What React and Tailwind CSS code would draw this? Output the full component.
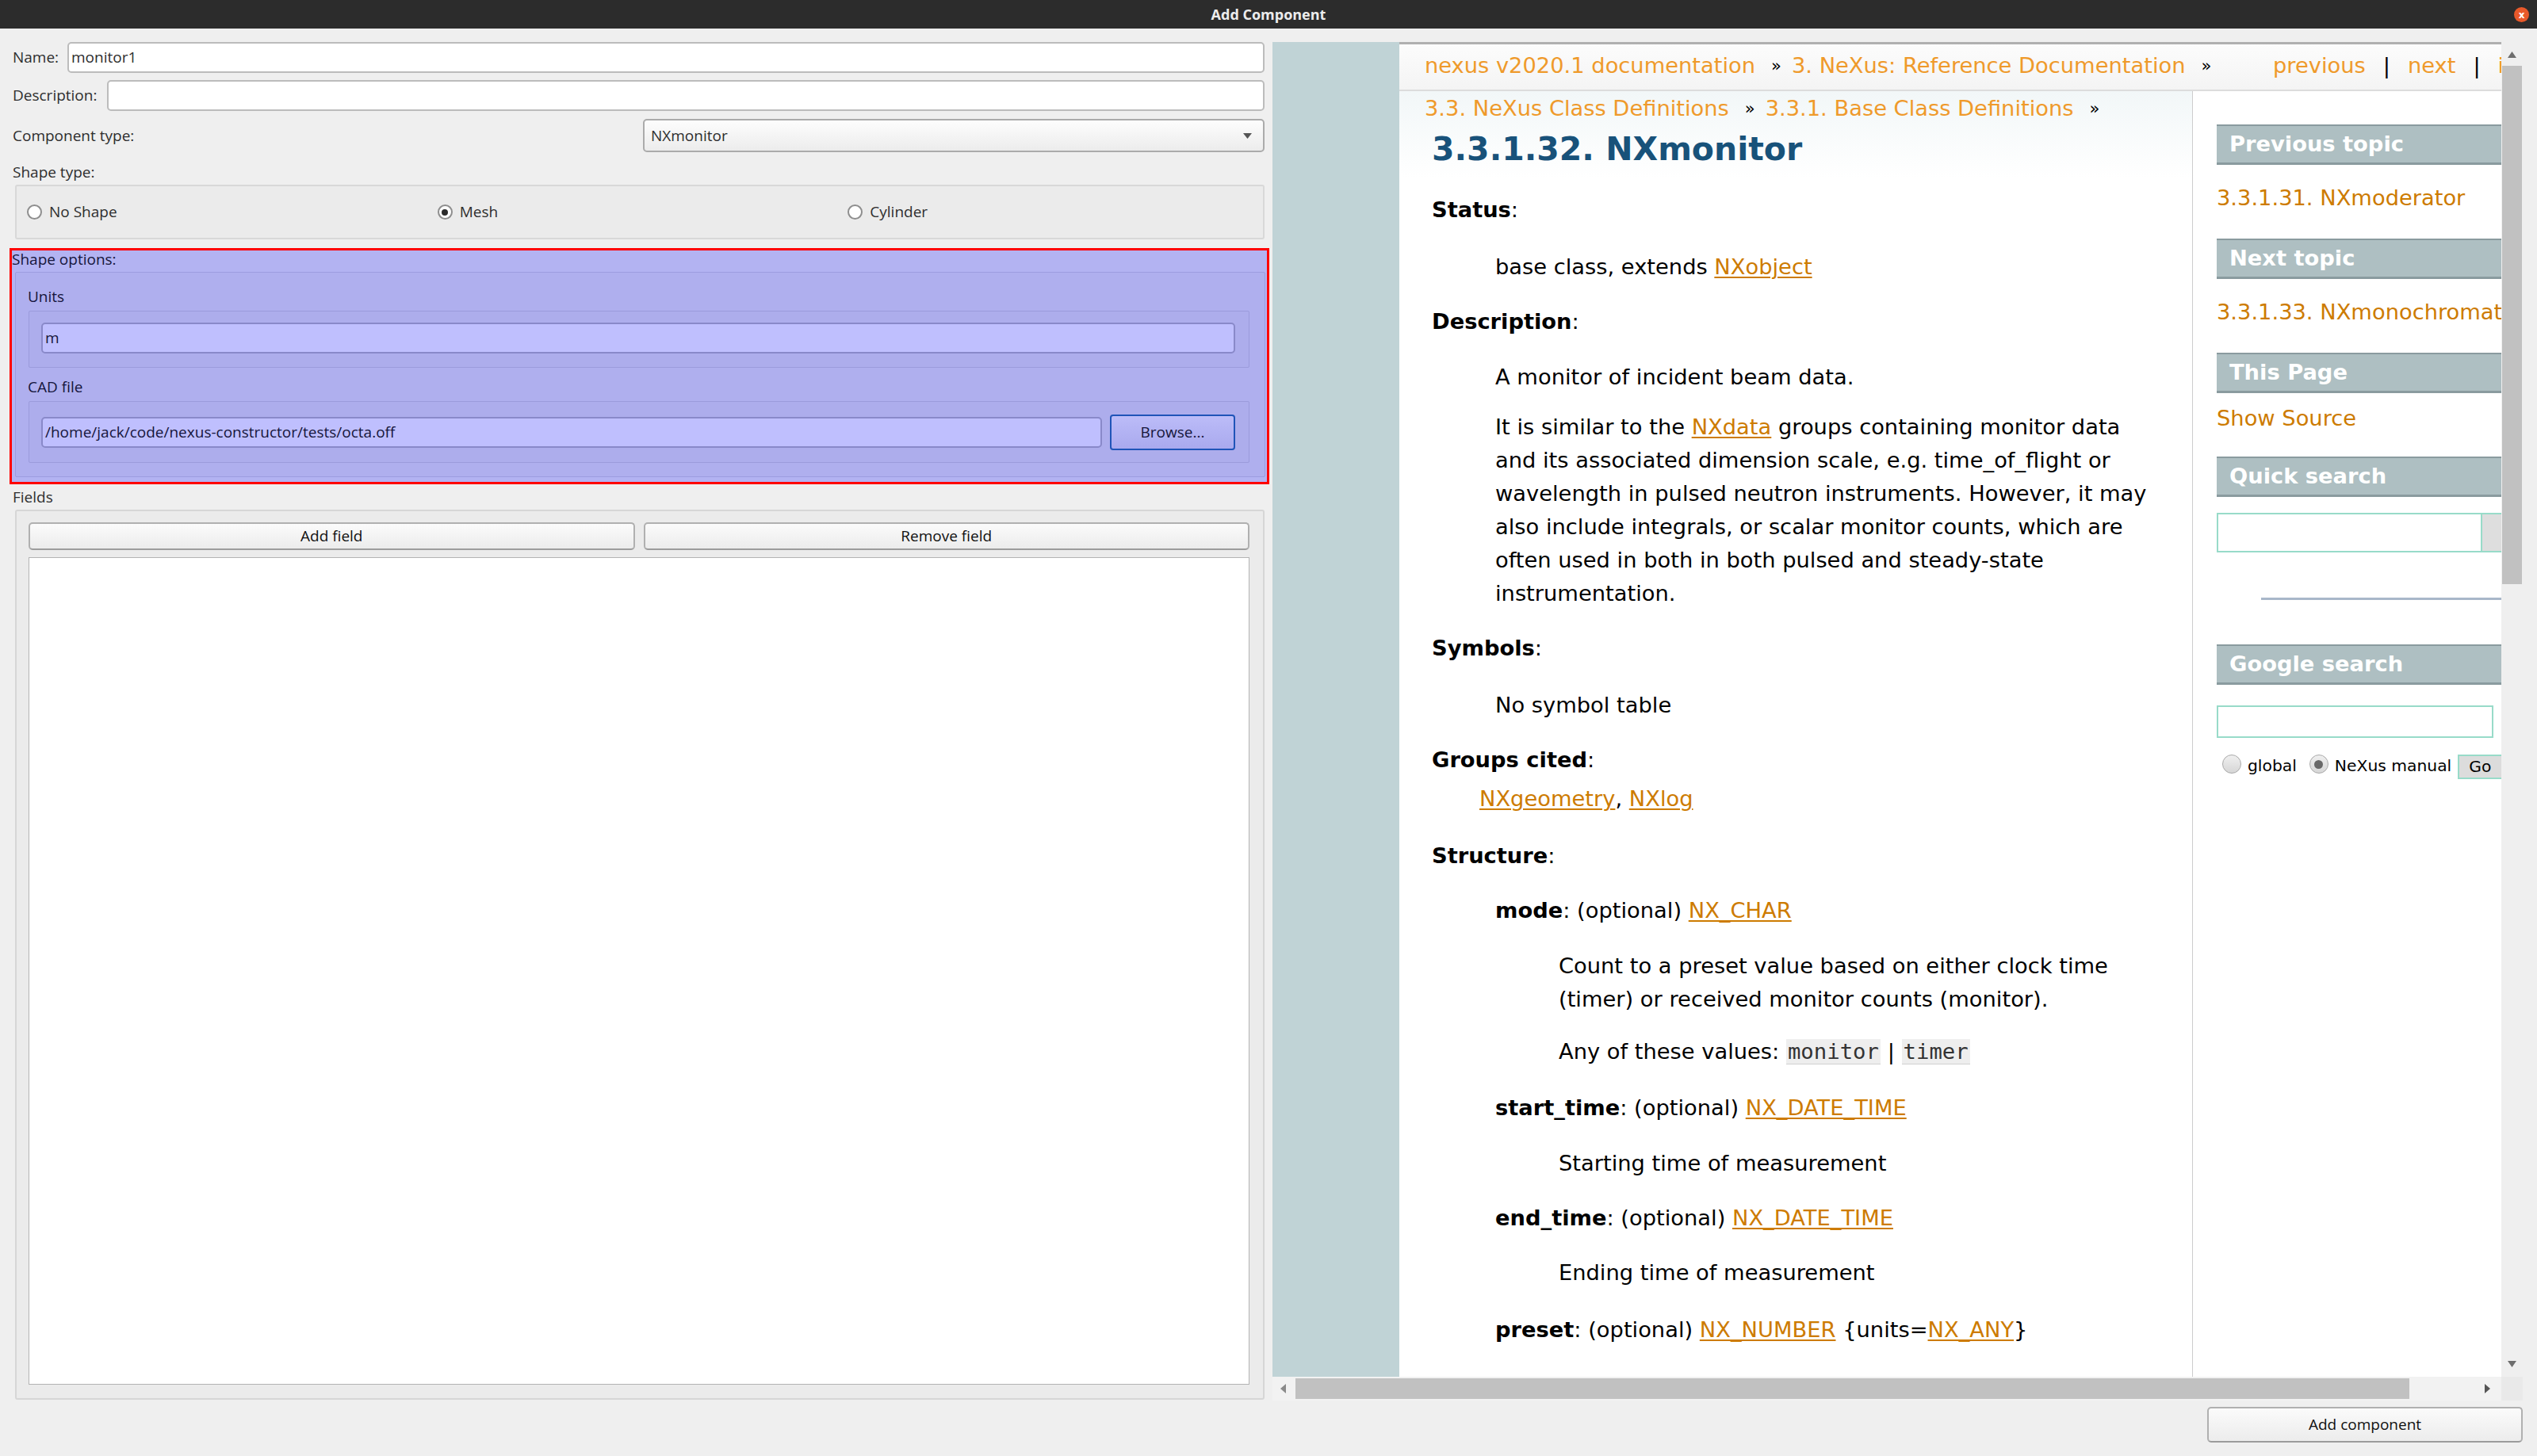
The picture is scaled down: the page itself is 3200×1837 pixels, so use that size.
import React from "react";

function QtInput({ children, className = "" }) {
  return (
    <div className={"h-[39px] bg-white border-2 border-[#bcbcbc] rounded-[5px] flex items-center pl-[3px] " + className}>
      {children}
    </div>
  );
}

function Radio({ checked, label }) {
  return (
    <div className="flex items-center gap-[9px]">
      <span className="w-[19px] h-[19px] rounded-full border-2 border-[#8e8e8e] bg-white flex items-center justify-center">
        {checked && <span className="w-[8px] h-[8px] rounded-full bg-[#2b2b2b]" />}
      </span>
      <span>{label}</span>
    </div>
  );
}

function QtButton({ children, className = "" }) {
  return (
    <div className={"flex items-center justify-center rounded-[5px] border-2 border-[#b0b0b0] border-b-[#9c9c9c] bg-gradient-to-b from-[#fbfbfb] to-[#ececec] " + className}>
      {children}
    </div>
  );
}

function LeftPanel() {
  return (
    <div className="w-[1600px] flex-none flex flex-col pl-[16px] pr-[5px] pb-[1px] text-[19px] text-[#2e2e2e] font-['Open_Sans',sans-serif]">
      <div className="h-[39px] flex items-center">
        <span className="w-[69px] flex-none">Name:</span>
        <QtInput className="flex-1">monitor1</QtInput>
      </div>
      <div className="mt-[9px] h-[39px] flex items-center">
        <span className="w-[119px] flex-none">Description:</span>
        <QtInput className="flex-1" />
      </div>
      <div className="mt-[10px] h-[42px] flex items-center">
        <span className="flex-1">Component type:</span>
        <div className="w-[784px] h-[42px] rounded-[5px] border-2 border-[#ababab] bg-gradient-to-b from-[#fdfdfd] to-[#ececec] flex items-center pl-[8px] pr-[14px]">
          <span className="flex-1">NXmonitor</span>
          <svg width="11" height="7" viewBox="0 0 11 7"><path d="M0 0 L11 0 L5.5 7 Z" fill="#555" /></svg>
        </div>
      </div>
      <div className="mt-[13px] h-[24px] flex items-center">Shape type:</div>
      <div className="mt-[4px] ml-[3px] h-[69px] bg-[#ebebeb] border-2 border-[#d8d8d8] rounded-[3px] grid grid-cols-3 items-center pl-[13px] pr-[6px]">
        <Radio label="No Shape" />
        <Radio label="Mesh" checked />
        <Radio label="Cylinder" />
      </div>

      <div className="mt-[11px] -ml-[4px] -mr-[6px] border-[3px] border-[#ff0000] bg-[#b3b3f2] text-[#16163c] flex flex-col pb-[6px]">
        <div className="h-[22px] flex items-center">Shape options:</div>
        <div className="mt-[5px] ml-[4px] mr-[2px] border border-[#9c9cdf] bg-[#afafee] rounded-[2px] flex flex-col pt-[18px] pb-[17px] pl-[16px] pr-[19px]">
          <div className="h-[24px] flex items-center -ml-[1px]">Units</div>
          <div className="mt-[6px] h-[72px] border border-[#9b9bdc] bg-[#adadec] rounded-[2px] pt-[14px] pl-[15px] pr-[17px]">
            <div className="h-[39px] bg-[#bfbffe] border-2 border-[#8989c9] rounded-[5px] flex items-center pl-[3px]">m</div>
          </div>
          <div className="mt-[12px] h-[24px] flex items-center -ml-[1px]">CAD file</div>
          <div className="mt-[6px] h-[78px] border border-[#9b9bdc] bg-[#adadec] rounded-[2px] flex items-center pl-[15px] pr-[17px]">
            <div className="flex-1 h-[39px] bg-[#bfbffe] border-2 border-[#8989c9] rounded-[5px] flex items-center pl-[3px]">/home/jack/code/nexus-constructor/tests/octa.off</div>
            <div className="ml-[10px] w-[158px] h-[45px] rounded-[4px] border-2 border-[#1f54b8] bg-gradient-to-b from-[#bcbcf8] to-[#a9a9ee] flex items-center justify-center">Browse...</div>
          </div>
        </div>
      </div>

      <div className="mt-[4px] h-[24px] flex items-center">Fields</div>
      <div className="mt-[4px] ml-[3px] flex-1 bg-[#ebebeb] border-2 border-[#d6d6d6] rounded-[3px] flex flex-col pt-[14px] pb-[17px] pl-[15px] pr-[17px]">
        <div className="h-[35px] flex gap-[11px]">
          <QtButton className="flex-1 text-[#111]">Add field</QtButton>
          <QtButton className="flex-1 text-[#111]">Remove field</QtButton>
        </div>
        <div className="mt-[9px] flex-1 bg-white border border-[#b3b3b3]" />
      </div>
    </div>
  );
}

function Lk({ children }) {
  return <span className="text-[#cd7b00] underline decoration-[2px] underline-offset-[3px]">{children}</span>;
}

function SideHead({ children, className = "" }) {
  return (
    <div className={"h-[51px] w-[420px] bg-[#aebfc2] border-t-[2px] border-b-[3px] border-[#8a9b9f] flex items-center pl-[16px] text-white font-bold text-[27.3px] " + className}>
      {children}
    </div>
  );
}

function Sep() {
  return <span className="text-black text-[21px] pl-[20px] pr-[13px]">»</span>;
}

function Code({ children }) {
  return (
    <span className="font-['DejaVu_Sans_Mono',monospace] bg-[#eeeeee] border-b border-[#d0d0d0] px-[2px] text-[#333]">{children}</span>
  );
}

function WebPage() {
  return (
    <div className="flex h-full font-['DejaVu_Sans',sans-serif] text-[27.3px] leading-[42px] text-black">
      <div className="w-[160px] flex-none bg-[#c0d3d6]" />
      <div className="flex-none w-[1481px] flex flex-col bg-white border-t-[3px] border-[#b0b0b0]">
        <div className="h-[59px] flex-none border-b-2 border-[#dcdcdc] bg-gradient-to-b from-[#fcfcfc] to-[#f4f4f4] flex items-center pl-[32px] pb-[3px] whitespace-nowrap">
          <div className="w-[1070px] flex-none flex items-center">
            <span className="text-[#ef9a2b]">nexus v2020.1 documentation</span>
            <Sep />
            <span className="text-[#ef9a2b]">3. NeXus: Reference Documentation</span>
            <Sep />
          </div>
          <span className="text-[#ef9a2b]">previous</span>
          <span className="ml-[22px]">|</span>
          <span className="ml-[22px] text-[#ef9a2b]">next</span>
          <span className="ml-[22px]">|</span>
          <span className="ml-[22px] text-[#ef9a2b]">index</span>
        </div>
        <div className="flex flex-1">
          <div className="w-[1000px] flex-none bg-gradient-to-b from-[#f2f7f8] to-white to-[110px] flex flex-col whitespace-nowrap">
            <div className="mt-[1px] pl-[32px] flex items-center">
              <span className="text-[#ef9a2b]">3.3. NeXus Class Definitions</span>
              <Sep />
              <span className="text-[#ef9a2b]">3.3.1. Base Class Definitions</span>
              <Sep />
            </div>
            <div className="pl-[41px] flex flex-col">
              <div className="mt-[5px] h-[50px] leading-[50px] text-[41px] font-bold text-[#18527a]">3.3.1.32. NXmonitor</div>
              <div className="mt-[31px]"><b>Status</b>:</div>
              <div className="mt-[30px] ml-[80px]">base class, extends <Lk>NXobject</Lk></div>
              <div className="mt-[27px]"><b>Description</b>:</div>
              <div className="mt-[28px] ml-[80px]">A monitor of incident beam data.</div>
              <div className="mt-[21px] ml-[80px] whitespace-normal w-[860px]">
                It is similar to the <Lk>NXdata</Lk> groups containing monitor data<br />
                and its associated dimension scale, e.g. time_of_flight or<br />
                wavelength in pulsed neutron instruments. However, it may<br />
                also include integrals, or scalar monitor counts, which are<br />
                often used in both in both pulsed and steady-state<br />
                instrumentation.
              </div>
              <div className="mt-[27px]"><b>Symbols</b>:</div>
              <div className="mt-[30px] ml-[80px]">No symbol table</div>
              <div className="mt-[27px]"><b>Groups cited</b>:</div>
              <div className="mt-[7px] ml-[60px]"><Lk>NXgeometry</Lk>, <Lk>NXlog</Lk></div>
              <div className="mt-[30px]"><b>Structure</b>:</div>
              <div className="mt-[27px] ml-[80px]"><b>mode</b>: (optional) <Lk>NX_CHAR</Lk></div>
              <div className="mt-[28px] ml-[160px]">
                Count to a preset value based on either clock time<br />
                (timer) or received monitor counts (monitor).
              </div>
              <div className="mt-[24px] ml-[160px]">Any of these values: <Code>monitor</Code> | <Code>timer</Code></div>
              <div className="mt-[29px] ml-[80px]"><b>start_time</b>: (optional) <Lk>NX_DATE_TIME</Lk></div>
              <div className="mt-[28px] ml-[160px]">Starting time of measurement</div>
              <div className="mt-[27px] ml-[80px]"><b>end_time</b>: (optional) <Lk>NX_DATE_TIME</Lk></div>
              <div className="mt-[27px] ml-[160px]">Ending time of measurement</div>
              <div className="mt-[30px] ml-[80px]"><b>preset</b>: (optional) <Lk>NX_NUMBER</Lk> {"{"}units=<Lk>NX_ANY</Lk>{"}"}</div>
            </div>
          </div>
          <div className="w-[480px] flex-none border-l border-[#cdcdcd] pl-[30px] flex flex-col whitespace-nowrap">
            <SideHead className="mt-[42px]">Previous topic</SideHead>
            <div className="mt-[21px] text-[#cd7b00]">3.3.1.31. NXmoderator</div>
            <SideHead className="mt-[30px]">Next topic</SideHead>
            <div className="mt-[21px] text-[#cd7b00]">3.3.1.33. NXmonochromator</div>
            <SideHead className="mt-[30px]">This Page</SideHead>
            <div className="mt-[11px] text-[#cd7b00]">Show Source</div>
            <SideHead className="mt-[27px]">Quick search</SideHead>
            <div className="mt-[20px] h-[50px] flex">
              <div className="w-[335px] h-full border-2 border-[#98dbc9] bg-white" />
              <div className="w-[70px] h-full border-2 border-l-0 border-[#98dbc9] bg-[#dedede]" />
            </div>
            <div className="mt-[57px] ml-[56px] h-[3px] w-[400px] bg-[#a8b7c9]" />
            <SideHead className="mt-[56px]">Google search</SideHead>
            <div className="mt-[26px] w-[349px] h-[41px] border-2 border-[#98dbc9] bg-white" />
            <div className="mt-[16px] h-[34px] flex items-center pl-[7px] text-[20.3px] leading-[24px]">
              <span className="w-[24px] h-[24px] rounded-full border border-[#a9a9a9] bg-gradient-to-b from-[#f0f0f0] to-[#d6d6d6]" />
              <span className="ml-[8px] mt-[4px]">global</span>
              <span className="ml-[16px] w-[24px] h-[24px] rounded-full border border-[#a9a9a9] bg-gradient-to-b from-[#f0f0f0] to-[#d6d6d6] flex items-center justify-center">
                <span className="w-[11px] h-[11px] rounded-full bg-[#686868]" />
              </span>
              <span className="ml-[8px] mt-[4px]">NeXus manual</span>
              <span className="ml-[8px] mt-[6px] w-[70px] h-[31px] bg-[#dcdcdc] border-2 border-[#98dbc9] flex items-center pl-[12px]">Go</span>
            </div>
          </div>
        </div>
      </div>
    </div>
  );
}

function WebView() {
  return (
    <div className="ml-[5px] w-[1577px] h-[1714px] flex-none flex flex-col">
      <div className="flex h-[1684px]">
        <div className="w-[1550px] h-full overflow-hidden">
          <WebPage />
        </div>
        <div className="w-[27px] h-full bg-[#efefef] flex flex-col items-center">
          <svg className="mt-[12px]" width="11" height="8" viewBox="0 0 11 8"><path d="M5.5 0 L11 8 L0 8 Z" fill="#6e6e6e" /></svg>
          <div className="mt-[10px] w-[25px] h-[654px] bg-[#c1c1c1]" />
          <div className="flex-1" />
          <svg className="mb-[12px]" width="11" height="8" viewBox="0 0 11 8"><path d="M0 0 L11 0 L5.5 8 Z" fill="#6e6e6e" /></svg>
        </div>
      </div>
      <div className="flex h-[30px]">
        <div className="w-[1550px] h-full bg-[#f2f2f2] flex items-center">
          <svg className="ml-[10px]" width="7" height="12" viewBox="0 0 7 12"><path d="M0 6 L7 0 L7 12 Z" fill="#8a8a8a" /></svg>
          <div className="ml-[12px] w-[1405px] h-[26px] bg-[#c1c1c1]" />
          <svg className="ml-[95px]" width="7" height="12" viewBox="0 0 7 12"><path d="M7 6 L0 0 L0 12 Z" fill="#555" /></svg>
        </div>
        <div className="w-[27px] h-full bg-[#e9e9e9]" />
      </div>
    </div>
  );
}

export default function App() {
  return (
    <div className="w-[3200px] h-[1837px] bg-[#efefef] flex flex-col overflow-hidden">
      <div className="h-[36px] flex-none bg-[#2c2c2c] flex items-center justify-center relative">
        <span className="text-[18px] font-bold text-[#ececec] font-['Open_Sans',sans-serif]">Add Component</span>
        <span className="absolute right-[10px] top-[9px] w-[19px] h-[19px] rounded-full bg-[#e8592a] flex items-center justify-center text-white text-[12px] font-bold leading-none font-['DejaVu_Sans',sans-serif]">x</span>
      </div>
      <div className="flex pt-[17px] h-[1731px] flex-none">
        <LeftPanel />
        <WebView />
      </div>
      <div className="flex justify-end pr-[18px] pt-[8px]">
        <QtButton className="w-[398px] h-[45px] text-[19px] text-[#111] font-['Open_Sans',sans-serif]">Add component</QtButton>
      </div>
    </div>
  );
}
